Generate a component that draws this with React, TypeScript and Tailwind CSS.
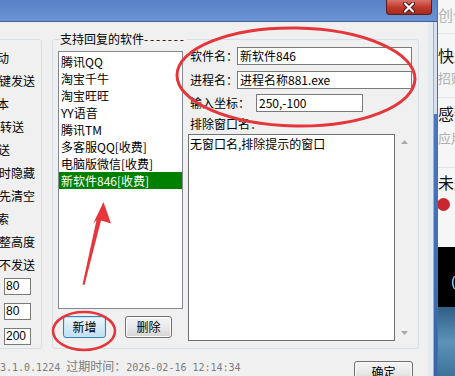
import React from 'react';

const softwareList = [
  '腾讯QQ',
  '淘宝千牛',
  '淘宝旺旺',
  'YY语音',
  '腾讯TM',
  '多客服QQ[收费]',
  '电脑版微信[收费]',
  '新软件846[收费]',
];

// left options panel, only the right end of each label is visible
const leftLabels = [
  { text: '动', cls: 'ml-[-4px]' },
  { text: '键发送', cls: 'ml-[-2px]' },
  { text: '本', cls: 'ml-[-4px]' },
  { text: '转送', cls: 'ml-[-1px]' },
  { text: '送', cls: 'ml-[-3px]' },
  { text: '时隐藏', cls: 'ml-[-2px]' },
  { text: '先清空', cls: 'ml-[-2px]' },
  { text: '索', cls: 'ml-[-4px]' },
  { text: '整高度', cls: 'ml-[-2px]' },
  { text: '不发送', cls: 'ml-[-2px]' },
];

const mono = "font-['DejaVu_Sans_Mono',monospace] text-[10px]";

const TitleBar: React.FC = () => (
  <div className="flex h-[22px] shrink-0 items-start justify-end border-b border-[#3f5f95] bg-linear-to-b from-[#5882c6] to-[#6b93d5] pr-[5px]">
    <div className="flex h-[15px] w-[46px] items-center justify-center rounded-b-[4px] border border-t-0 border-[#5a1d17] bg-linear-to-b from-[#d9726a] via-[#c2392c] to-[#a82b20]">
      <svg width="14" height="11" viewBox="0 0 14 11">
        <path d="M3 1.5l8 8M11 1.5l-8 8" stroke="#4a1410" strokeWidth={4} strokeLinecap="round" />
        <path d="M3 1.5l8 8M11 1.5l-8 8" stroke="#ffffff" strokeWidth={2.2} strokeLinecap="round" />
      </svg>
    </div>
  </div>
);

const LeftPanel: React.FC = () => (
  <div className="ml-[-10px] h-[310px] w-[52px] shrink-0 overflow-hidden rounded-[3px] border border-[#d5dfe5] pl-[10px] pt-[6px]">
    {leftLabels.map((l) => (
      <div key={l.text} className={`h-[23px] whitespace-nowrap leading-[23px] ${l.cls}`}>
        {l.text}
      </div>
    ))}
    <div className="ml-[3px] mt-[2px] flex flex-col gap-[8px]">
      {['80', '80', '200'].map((v, i) => (
        <div
          key={i}
          className="h-[17px] w-[27px] border border-[#7a7a7a] bg-white pl-[1px] font-['Liberation_Sans',sans-serif] text-[12px] leading-[15px]"
        >
          {v}
        </div>
      ))}
    </div>
  </div>
);

const WinButton: React.FC<{ focused?: boolean; className?: string; children: React.ReactNode }> = ({
  focused,
  className,
  children,
}) => (
  <div
    className={`flex h-[22px] items-center justify-center rounded-[3px] border leading-none ${
      focused
        ? 'border-[#3c7fb1] bg-linear-to-b from-[#eef7fc] to-[#bfdff1] shadow-[inset_0_0_0_1px_#c6e6f8]'
        : 'border-[#707070] bg-linear-to-b from-[#f4f4f4] via-[#eaeaea] to-[#d4d4d4] shadow-[inset_0_0_0_1px_#fbfbfb]'
    } ${className ?? ''}`}
  >
    {children}
  </div>
);

const SoftwarePanel: React.FC = () => (
  <div className="relative ml-[10px] flex h-[310px] w-[367px] shrink-0 rounded-[3px] border border-[#d5dfe5] pl-[5px] pt-[11px]">
    {/* group title */}
    <span className="absolute left-[7px] top-[-9px] whitespace-nowrap bg-[#f0f0f0] pr-[1px] leading-[16px]">
      支持回复的软件<span className="tracking-[1.8px]">-------</span>
    </span>

    {/* list and buttons */}
    <div className="flex w-[125px] shrink-0 flex-col">
      <div className="h-[258px] border border-[#828790] bg-white pt-[1px]">
        {softwareList.map((s, i) => (
          <div
            key={s}
            className={`h-[17px] whitespace-nowrap pl-[2px] leading-[17px] ${
              i === softwareList.length - 1 ? 'bg-[#008000] text-white' : ''
            }`}
          >
            {s}
          </div>
        ))}
      </div>
      <div className="mt-[7px] flex">
        <WinButton focused className="ml-[5px] w-[43px]">
          新增
        </WinButton>
        <WinButton className="ml-[19px] w-[47px]">删除</WinButton>
      </div>
    </div>

    {/* fields */}
    <div className="ml-[5px] mt-[-4px] flex w-[225px] flex-col">
      <div className="flex h-[18px] items-center">
        <span className="w-[49px] shrink-0 whitespace-nowrap pl-[2px]">软件名：</span>
        <div className="h-[18px] w-[175px] shrink-0 border border-[#7a7a7a] bg-white pl-[2px] leading-[16px]">
          新软件846
        </div>
      </div>
      <div className="mt-[6px] flex h-[18px] items-center">
        <span className="w-[49px] shrink-0 whitespace-nowrap pl-[2px]">进程名：</span>
        <div className="h-[18px] w-[175px] shrink-0 border border-[#7a7a7a] bg-white pl-[2px] leading-[16px]">
          进程名称881.exe
        </div>
      </div>
      <div className="mt-[5px] flex h-[18px] items-center">
        <span className="w-[68px] shrink-0 whitespace-nowrap pl-[2px]">输入坐标：</span>
        <div className="h-[18px] w-[107px] shrink-0 border border-[#7a7a7a] bg-white pl-[2px] leading-[16px]">
          250,-100
        </div>
      </div>
      <div className="mt-[4px] whitespace-nowrap pl-[2px] leading-[16px]">排除窗口名：</div>
      <div className="mt-[2px] flex h-[207px]">
        <div className="w-[207px] border border-[#707070] bg-white pl-[1px] pt-[1px] leading-[16px]">
          无窗口名,排除提示的窗口
        </div>
        <div className="flex w-[18px] flex-col items-center justify-between py-[6px]">
          <svg width="7" height="4" viewBox="0 0 7 4">
            <path d="M3.5 0L7 4H0z" fill="#a9a9a9" />
          </svg>
          <svg width="7" height="4" viewBox="0 0 7 4">
            <path d="M0 0h7L3.5 4z" fill="#a9a9a9" />
          </svg>
        </div>
      </div>
    </div>
  </div>
);

const ClientArea: React.FC = () => (
  <div className="flex w-[428px] shrink-0 flex-col overflow-hidden bg-[#f0f0f0] pt-[17px]">
    <div className="flex">
      <LeftPanel />
      <SoftwarePanel />
    </div>
    <div className="flex">
      <span className="mt-[9px] whitespace-nowrap leading-[16px] text-[#7c7c7c]">
        <span className={mono}>3.1.0.1224 </span>过期时间：<span className={mono}>2026-02-16 12:14:34</span>
      </span>
      <WinButton className="ml-auto mr-[15px] mt-[12px] w-[59px]">确定</WinButton>
    </div>
  </div>
);

const WindowFrame: React.FC = () => (
  <div className="flex w-[9px] shrink-0">
    <div className="w-[5px] bg-[#e4eaf2]" />
    <div className="w-px bg-[#9fb0c6]" />
    <div className="flex w-[3px] flex-col">
      <div className="h-[92px] bg-[#d5e1f0]" />
      <div className="flex-1 bg-linear-to-b from-[#4a79c2] to-[#3864a8]" />
    </div>
  </div>
);

const BehindWindow: React.FC = () => (
  <div className="flex w-[18px] shrink-0 flex-col overflow-hidden whitespace-nowrap border-l border-[#6a6a6a] bg-[#f6f6f6]">
    <div className="h-[33px] pt-[5px] text-[15px] leading-[20px] text-[#b4b4b4]">创作</div>
    <div className="h-px shrink-0 bg-[#e2e2e2]" />
    <div className="mt-[11px] text-[16px] leading-[20px] text-[#111]">快乐</div>
    <div className="mt-[5px] text-[13px] leading-[16px] text-[#b0b0b0]">招财</div>
    <div className="mt-[11px] h-px shrink-0 bg-[#e2e2e2]" />
    <div className="mt-[5px] text-[16px] leading-[20px] text-[#111]">感谢</div>
    <div className="mt-[7px] text-[13px] leading-[16px] text-[#b0b0b0]">应用</div>
    <div className="mt-[21px] h-px shrink-0 bg-[#e2e2e2]" />
    <div className="mt-[4px] text-[16px] leading-[20px] text-[#111]">未来</div>
    <div className="ml-[-1px] mt-[6px] h-[13px] w-[13px] shrink-0 rounded-full bg-[#c8262c]" />
    <div className="h-[36px] shrink-0" />
    <div className="relative h-[60px] shrink-0 bg-black">
      <span className="absolute left-[13px] top-[28px] text-[13px] leading-[14px] text-white">(</span>
    </div>
    <div className="flex-1 bg-linear-to-b from-[#2f5e86] via-[#5d93b8] to-[#3f729a]" />
  </div>
);

const Annotations: React.FC = () => (
  <svg className="pointer-events-none absolute left-0 top-0" width="455" height="376" viewBox="0 0 455 376">
    <ellipse
      cx="296"
      cy="77"
      rx="119"
      ry="49"
      transform="rotate(1 296 77)"
      fill="none"
      stroke="#e5363c"
      strokeWidth={3}
    />
    <ellipse cx="84" cy="331" rx="31" ry="19" fill="none" stroke="#e5363c" strokeWidth={2.6} />
    <path d="M103.5 202L111 223.5L101 220.5L84.5 285L82.5 284.5L96.5 220L93 224z" fill="#e5363c" />
  </svg>
);

export default function App() {
  return (
    <div className="relative flex h-[376px] w-[455px] overflow-hidden bg-[#f0f0f0] font-['Noto_Sans_CJK_SC',sans-serif] text-[12px] text-black">
      <div className="flex w-[437px] shrink-0 flex-col">
        <TitleBar />
        <div className="flex flex-1">
          <ClientArea />
          <WindowFrame />
        </div>
      </div>
      <BehindWindow />
      <Annotations />
    </div>
  );
}
